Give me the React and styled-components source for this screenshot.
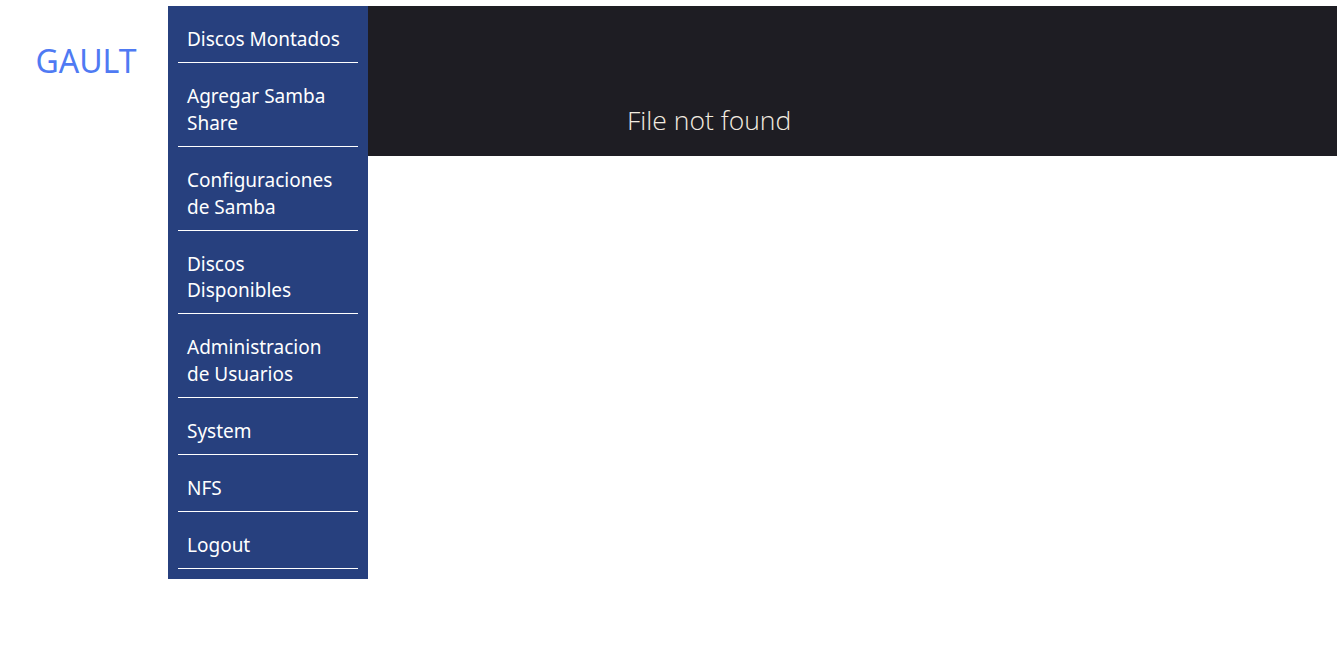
import React from "react";
import styled, { createGlobalStyle } from "styled-components";

const GlobalStyle = createGlobalStyle`
  html, body {
    margin: 0;
    padding: 0;
    background: #ffffff;
    font-family: "Noto Sans", "Open Sans", sans-serif;
  }
`;

const Page = styled.div`
  display: flex;
  align-items: flex-start;
  padding: 6px;
`;

const LogoCol = styled.div`
  width: 160px;
  flex-shrink: 0;
  display: flex;
  justify-content: center;
  padding-top: 33px;
  margin-right: 2px;
`;

const Logo = styled.div`
  font-size: 32px;
  color: #4f7af3;
  line-height: normal;
`;

const Sidebar = styled.nav`
  width: 200px;
  flex-shrink: 0;
  background: #27407e;
  padding: 0 10px 10px;
  box-sizing: border-box;
`;

const MenuItem = styled.a`
  display: block;
  padding: 20px 12px 9px 9px;
  border-bottom: 1px solid #ffffff;
  color: #ffffff;
  font-size: 19px;
  line-height: 26.9px;
  text-decoration: none;
`;

const Main = styled.main`
  flex: 1;
`;

const Header = styled.header`
  height: 150px;
  background: #1e1d23;
  box-sizing: border-box;
  padding: 96px 0 0 259px;
`;

const Message = styled.div`
  font-family: "Open Sans", "Noto Sans", sans-serif;
  font-weight: 300;
  font-size: 26.5px;
  color: #f3ece0;
  line-height: 36px;
`;

const items = [
  "Discos Montados",
  "Agregar Samba Share",
  "Configuraciones de Samba",
  "Discos Disponibles",
  "Administracion de Usuarios",
  "System",
  "NFS",
  "Logout",
];

export default function App() {
  return (
    <>
      <GlobalStyle />
      <Page>
        <LogoCol>
          <Logo>GAULT</Logo>
        </LogoCol>
        <Sidebar>
          {items.map((label) => (
            <MenuItem key={label} href="#">
              {label}
            </MenuItem>
          ))}
        </Sidebar>
        <Main>
          <Header>
            <Message>File not found</Message>
          </Header>
        </Main>
      </Page>
    </>
  );
}
